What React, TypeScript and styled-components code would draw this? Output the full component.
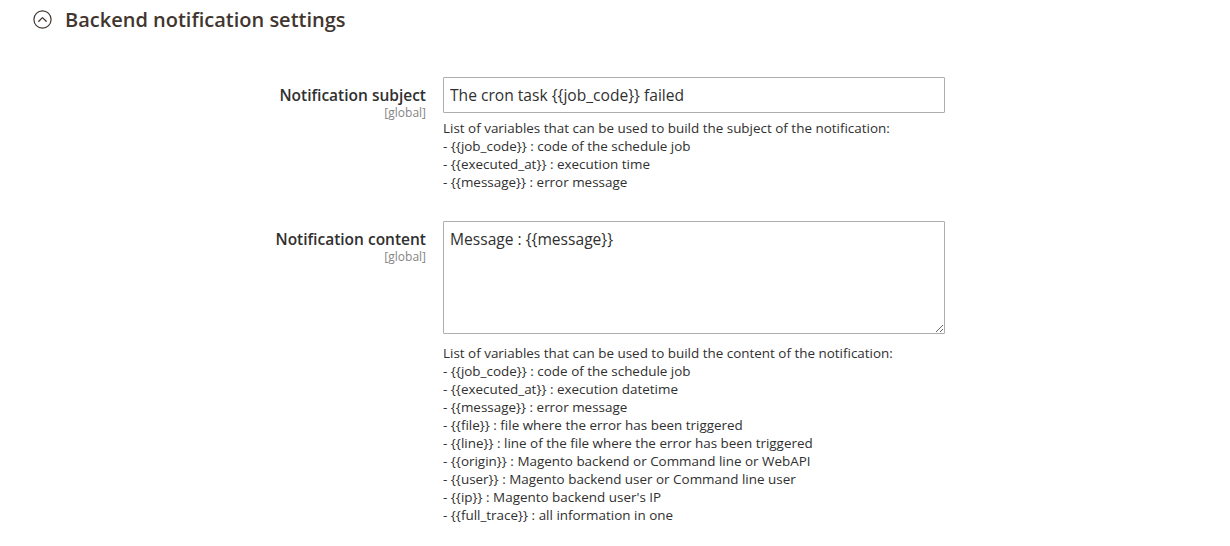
import styled, { createGlobalStyle } from "styled-components";

const GlobalStyle = createGlobalStyle`
  html, body {
    margin: 0;
    padding: 0;
    background: #ffffff;
  }
  body {
    font-family: "Open Sans", "Liberation Sans", sans-serif;
    color: #303030;
  }
`;

const subjectVars = [
  "List of variables that can be used to build the subject of the notification:",
  "- {{job_code}} : code of the schedule job",
  "- {{executed_at}} : execution time",
  "- {{message}} : error message",
];

const contentVars = [
  "List of variables that can be used to build the content of the notification:",
  "- {{job_code}} : code of the schedule job",
  "- {{executed_at}} : execution datetime",
  "- {{message}} : error message",
  "- {{file}} : file where the error has been triggered",
  "- {{line}} : line of the file where the error has been triggered",
  "- {{origin}} : Magento backend or Command line or WebAPI",
  "- {{user}} : Magento backend user or Command line user",
  "- {{ip}} : Magento backend user's IP",
  "- {{full_trace}} : all information in one",
];

function CollapseIcon() {
  return (
    <svg width="19" height="19" viewBox="0 0 19 19" fill="none">
      <circle cx="9.5" cy="9.5" r="8.6" stroke="#41362f" strokeWidth="1.2" />
      <path d="M5.8 11.2 L9.5 7.6 L13.2 11.2" stroke="#41362f" strokeWidth="1.3" strokeLinecap="round" strokeLinejoin="round" />
    </svg>
  );
}

export default function App() {
  return (
    <>
      <GlobalStyle />
      <Page>
        <SectionHeader>
          <CollapseIcon />
          <SectionTitle>Backend notification settings</SectionTitle>
        </SectionHeader>

        <Fields>
          <FieldRow>
            <LabelCell>
              <FieldLabel>Notification subject</FieldLabel>
              <Scope>[global]</Scope>
            </LabelCell>
            <ControlCell>
              <TextInput type="text" defaultValue="The cron task {{job_code}} failed" />
              <Note $gap={6}>
                {subjectVars.map((line) => (
                  <div key={line}>{line}</div>
                ))}
              </Note>
            </ControlCell>
          </FieldRow>

          <FieldRow>
            <LabelCell>
              <FieldLabel>Notification content</FieldLabel>
              <Scope>[global]</Scope>
            </LabelCell>
            <ControlCell>
              <TextArea defaultValue="Message : {{message}}" />
              <Note $gap={10}>
                {contentVars.map((line) => (
                  <div key={line}>{line}</div>
                ))}
              </Note>
            </ControlCell>
          </FieldRow>
        </Fields>
      </Page>
    </>
  );
}

const Page = styled.div`
  width: 1230px;
  height: 546px;
  overflow: hidden;
  box-sizing: border-box;
  padding: 0 0 0 33px;
`;

const SectionHeader = styled.div`
  display: flex;
  align-items: center;
  gap: 13px;
  height: 39px;
`;

const SectionTitle = styled.h2`
  margin: 0;
  font-size: 20px;
  font-weight: 600;
  color: #41362f;
`;

const Fields = styled.div`
  display: flex;
  flex-direction: column;
  gap: 30px;
  padding-top: 38px;
`;

const FieldRow = styled.div`
  display: flex;
  align-items: flex-start;
  gap: 17px;
`;

const LabelCell = styled.div`
  width: 393px;
  display: flex;
  flex-direction: column;
  align-items: flex-end;
  padding-top: 7px;
`;

const FieldLabel = styled.span`
  font-size: 15.5px;
  font-weight: 600;
  line-height: 22px;
  color: #303030;
`;

const Scope = styled.span`
  font-size: 12px;
  line-height: 13px;
  color: #858585;
`;

const ControlCell = styled.div`
  width: 502px;
  display: flex;
  flex-direction: column;
`;

const fieldBase = `
  box-sizing: border-box;
  width: 100%;
  border: 1px solid #adadad;
  border-radius: 1px;
  background: #ffffff;
  font-family: "Open Sans", "Liberation Sans", sans-serif;
  font-size: 15.6px;
  color: #303030;
  padding: 0 6px;
  outline: none;
`;

const TextInput = styled.input`
  ${fieldBase}
  height: 36px;
  line-height: 34px;
`;

const TextArea = styled.textarea`
  ${fieldBase}
  height: 113px;
  padding-top: 6px;
  line-height: 22px;
  resize: vertical;
  display: block;
`;

const Note = styled.div<{ $gap: number }>`
  margin-top: ${({ $gap }) => $gap}px;
  font-size: 13.45px;
  line-height: 18px;
  color: #303030;
`;
